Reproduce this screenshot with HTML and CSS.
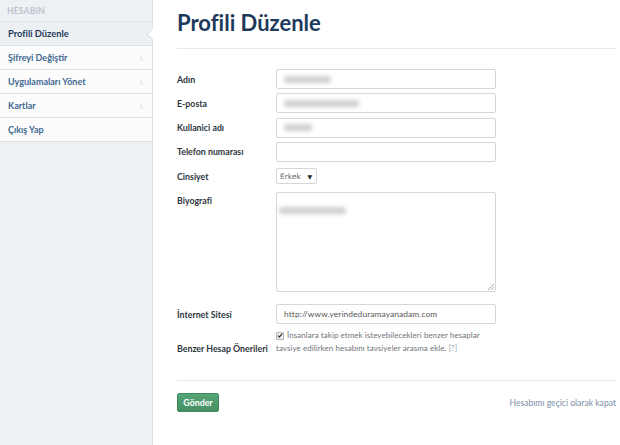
FILE: index.html
```html
<!DOCTYPE html>
<html lang="tr">
<head>
<meta charset="utf-8">
<title>Profili Düzenle</title>
<link rel="stylesheet" href="styles.css">
</head>
<body>
<div class="page">
  <aside class="sidebar">
    <div class="side-head">HESABIN</div>
    <ul class="side-menu">
      <li class="side-item active"><span>Profili Düzenle</span></li>
      <li class="side-item"><span>Şifreyi Değiştir</span><span class="chev">›</span></li>
      <li class="side-item"><span>Uygulamaları Yönet</span><span class="chev">›</span></li>
      <li class="side-item"><span>Kartlar</span><span class="chev">›</span></li>
      <li class="side-item"><span>Çıkış Yap</span></li>
    </ul>
  </aside>
  <main class="main">
    <h1 class="title">Profili Düzenle</h1>
    <hr class="rule">
    <div class="form">
      <div class="row">
        <label class="lbl">Adın</label>
        <div class="field"><span class="blur w47"></span></div>
      </div>
      <div class="row">
        <label class="lbl">E-posta</label>
        <div class="field"><span class="blur w75"></span></div>
      </div>
      <div class="row">
        <label class="lbl">Kullanici adı</label>
        <div class="field"><span class="blur w28"></span></div>
      </div>
      <div class="row">
        <label class="lbl">Telefon numarası</label>
        <div class="field"></div>
      </div>
      <div class="row r-sel">
        <label class="lbl">Cinsiyet</label>
        <div class="select"><span>Erkek</span><span class="arrow">▼</span></div>
      </div>
      <div class="row r-bio">
        <label class="lbl top">Biyografi</label>
        <div class="textarea"><span class="blur w67"></span><span class="grip"></span></div>
      </div>
      <div class="row r-web">
        <label class="lbl">İnternet Sitesi</label>
        <div class="field"><span class="url">http://www.yerindeduramayanadam.com</span></div>
      </div>
      <div class="row r-chk">
        <label class="lbl bottom">Benzer Hesap Önerileri</label>
        <p class="chk-text"><span class="line"><span class="chk"><svg viewBox="0 0 8 8" width="8" height="8"><path d="M1.3 4.2 L3.2 6.2 L6.9 1.4" fill="none" stroke="#333" stroke-width="1.6"/></svg></span>İnsanlara takip etmek isteyebilecekleri benzer hesaplar</span><span class="line">tavsiye edilirken hesabını tavsiyeler arasına ekle. <span class="q">[?]</span></span></p>
      </div>
    </div>
    <hr class="rule rule2">
    <div class="actions">
      <button class="btn" type="button">Gönder</button>
      <a class="deact" href="#">Hesabımı geçici olarak kapat</a>
    </div>
  </main>
</div>
</body>
</html>
```
FILE: styles.css
```css
* { box-sizing: border-box; }
html, body { margin: 0; padding: 0; }
body {
  font-family: Lato, "Liberation Sans", sans-serif;
  background: #fff;
  color: #333;
}
.page {
  display: flex;
  min-height: 445px;
  width: 620px;
}
.sidebar {
  width: 153px;
  flex: none;
  background: #eef1f4;
  border-right: 1px solid #dbe0e5;
}
.side-head {
  height: 22px;
  padding: 0 7px;
  font-size: 8.5px;
  font-weight: 700;
  color: #bac3cc;
  line-height: 22px;
  letter-spacing: 0.2px;
  border-bottom: 1px solid #dde2e7;
}
.side-menu { list-style: none; margin: 0; padding: 0; }
.side-item {
  position: relative;
  height: 24px;
  display: flex;
  align-items: center;
  justify-content: space-between;
  padding: 0 9px 0 8px;
  background: #fcfcfd;
  border-bottom: 1px solid #dde2e7;
  font-size: 9px;
  font-weight: 700;
  color: #3e6790;
}
.side-item.active {
  background: #edf0f3;
  color: #1d3a5c;
  font-size: 9.3px;
}
.side-item.active::after {
  content: "";
  position: absolute;
  right: -4px;
  top: 8px;
  width: 7px;
  height: 7px;
  background: #fff;
  border-left: 1px solid #d6dbe1;
  border-bottom: 1px solid #d6dbe1;
  transform: rotate(45deg);
}
.chev {
  color: #d3d8de;
  font-weight: 400;
  font-size: 12px;
}
.main {
  flex: 1;
  padding: 0 4px 0 24px;
}
.title {
  margin: 9px 0 0;
  font-size: 22px;
  line-height: 28px;
  font-weight: 700;
  color: #1d3a5c;
}
.rule {
  margin: 11px 0 0;
  border: 0;
  border-top: 1px solid #e6e8ea;
}
.form {
  display: flex;
  flex-direction: column;
  padding-top: 20px;
}
.row {
  display: grid;
  grid-template-columns: 99px 220px;
  align-items: center;
  margin-bottom: 4.3px;
}
.lbl {
  font-size: 8.8px;
  font-weight: 700;
  color: #2e3640;
  white-space: nowrap;
}
.lbl.top { align-self: start; padding-top: 3px; }
.lbl.bottom { align-self: end; padding-bottom: 1px; }
.field {
  height: 20px;
  border: 1px solid #d5d8db;
  border-radius: 2px;
  background: #fff;
  display: flex;
  align-items: center;
  padding: 0 7px;
}
.blur {
  display: inline-block;
  height: 7px;
  border-radius: 3px;
  background: #cfcfcf;
  filter: blur(2px);
}
.w47 { width: 47px; }
.w75 { width: 75px; }
.w28 { width: 28px; }
.w67 { width: 67px; }
.r-sel { margin-top: 2px; margin-bottom: 8px; }
.select {
  width: 41px;
  height: 16px;
  border: 1px solid #d5d8db;
  border-radius: 2px;
  display: flex;
  align-items: center;
  justify-content: space-between;
  padding: 0 4px 0 3px;
  font-family: "DejaVu Sans", sans-serif;
  font-size: 7.5px;
  color: #666;
}
.arrow { font-size: 6px; color: #222; }
.textarea {
  position: relative;
  height: 100px;
  border: 1px solid #d5d8db;
  border-radius: 2px;
  padding: 5px 2px;
}
.grip {
  position: absolute;
  right: 1px;
  bottom: 1px;
  width: 6px;
  height: 6px;
  background: linear-gradient(135deg, transparent 45%, #aaa 45%, #aaa 55%, transparent 55%, transparent 70%, #aaa 70%, #aaa 80%, transparent 80%);
}
.r-bio { margin-bottom: 12px; }
.r-web { margin-bottom: 5px; }
.url { font-size: 8.4px; color: #555; letter-spacing: 0.1px; }
.chk-text {
  margin: 0;
  font-size: 7.9px;
  line-height: 13px;
  color: #6d7378;
  letter-spacing: 0.1px;
}
.line { display: block; white-space: nowrap; }
.chk {
  display: inline-flex;
  align-items: center;
  justify-content: center;
  width: 8px;
  height: 8px;
  margin-right: 3px;
  border: 1px solid #b5b5b5;
  border-radius: 1px;
  background: #eee;
  vertical-align: -1px;
}
.chk svg { width: 7px; height: 7px; }
.q { color: #9aa6b2; }
.rule2 { margin-top: 21px; }
.actions {
  display: flex;
  justify-content: space-between;
  align-items: center;
  margin-top: 12px;
}
.btn {
  width: 42px;
  height: 19px;
  padding: 0;
  border: 1px solid #3f8a5c;
  border-radius: 2px;
  background: linear-gradient(#56a576, #458f63);
  color: #fff;
  font-family: inherit;
  font-size: 8.8px;
  font-weight: 700;
}
.deact {
  font-size: 8.6px;
  color: #7a8fa6;
  text-decoration: none;
}
```
